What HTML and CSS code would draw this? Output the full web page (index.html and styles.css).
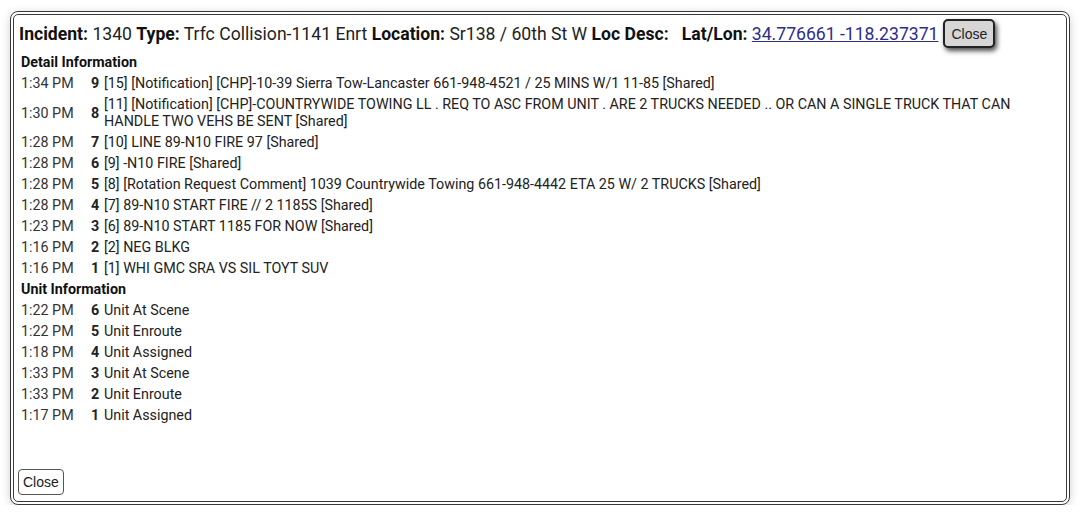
FILE: index.html
```html
<!DOCTYPE html>
<html>
<head>
<meta charset="utf-8">
<link rel="stylesheet" href="styles.css">
</head>
<body>
<div class="frame">
  <div class="header">
    <span class="title"><b>Incident:</b> 1340 <b>Type:</b> Trfc Collision-1141 Enrt <b>Location:</b> Sr138 / 60th St W <b>Loc Desc:</b>&nbsp;&nbsp; <b>Lat/Lon:</b> <a href="#" class="link">34.776661 -118.237371</a></span>
    <button class="btn-top">Close</button>
  </div>
  <table class="log">
    <tr><th colspan="3">Detail Information</th></tr>
    <tr><td class="t">1:34 PM</td><td class="n">9</td><td>[15] [Notification] [CHP]-10-39 Sierra Tow-Lancaster 661-948-4521 / 25 MINS W/1 11-85 [Shared]</td></tr>
    <tr><td class="t">1:30 PM</td><td class="n">8</td><td>[11] [Notification] [CHP]-COUNTRYWIDE TOWING LL . REQ TO ASC FROM UNIT . ARE 2 TRUCKS NEEDED .. OR CAN A SINGLE TRUCK THAT CAN HANDLE TWO VEHS BE SENT [Shared]</td></tr>
    <tr><td class="t">1:28 PM</td><td class="n">7</td><td>[10] LINE 89-N10 FIRE 97 [Shared]</td></tr>
    <tr><td class="t">1:28 PM</td><td class="n">6</td><td>[9] -N10 FIRE [Shared]</td></tr>
    <tr><td class="t">1:28 PM</td><td class="n">5</td><td>[8] [Rotation Request Comment] 1039 Countrywide Towing 661-948-4442 ETA 25 W/ 2 TRUCKS [Shared]</td></tr>
    <tr><td class="t">1:28 PM</td><td class="n">4</td><td>[7] 89-N10 START FIRE // 2 1185S [Shared]</td></tr>
    <tr><td class="t">1:23 PM</td><td class="n">3</td><td>[6] 89-N10 START 1185 FOR NOW [Shared]</td></tr>
    <tr><td class="t">1:16 PM</td><td class="n">2</td><td>[2] NEG BLKG</td></tr>
    <tr><td class="t">1:16 PM</td><td class="n">1</td><td>[1] WHI GMC SRA VS SIL TOYT SUV</td></tr>
    <tr><th colspan="3">Unit Information</th></tr>
    <tr><td class="t">1:22 PM</td><td class="n">6</td><td>Unit At Scene</td></tr>
    <tr><td class="t">1:22 PM</td><td class="n">5</td><td>Unit Enroute</td></tr>
    <tr><td class="t">1:18 PM</td><td class="n">4</td><td>Unit Assigned</td></tr>
    <tr><td class="t">1:33 PM</td><td class="n">3</td><td>Unit At Scene</td></tr>
    <tr><td class="t">1:33 PM</td><td class="n">2</td><td>Unit Enroute</td></tr>
    <tr><td class="t">1:17 PM</td><td class="n">1</td><td>Unit Assigned</td></tr>
  </table>
  <div class="footer">
    <button class="btn-bottom">Close</button>
  </div>
</div>
</body>
</html>
```
FILE: styles.css
```css
html, body {
  margin: 0;
  padding: 0;
  background: #ffffff;
}
body {
  padding: 11px 10px 0 10px;
  font-family: Roboto, "Liberation Sans", sans-serif;
  color: #222;
}
.frame {
  box-sizing: border-box;
  width: 1060px;
  height: 494px;
  border: 4px double #3a3a3a;
  border-radius: 8px;
  box-shadow: 0 2px 10px rgba(0,0,0,0.18);
  display: flex;
  flex-direction: column;
  background: #fff;
}
.header {
  display: flex;
  align-items: center;
  padding: 4px 6px 4px 5px;
}
.title {
  font-size: 17.6px;
  color: #222;
}
.title b {
  font-weight: 700;
  color: #111;
}
.link {
  color: #2d2d8c;
  text-decoration: underline;
}
.btn-top {
  margin-left: 5px;
  font-family: "Liberation Sans", Arial, sans-serif;
  font-size: 14px;
  color: #222;
  background: #d6d6d6;
  border: 2px solid #222;
  border-radius: 5px;
  height: 29px;
  padding: 0 6px;
  box-shadow: 2px 3px 5px rgba(0,0,0,0.7);
}
.log {
  border-collapse: collapse;
  margin: 0 6px 0 5px;
  font-size: 14.3px;
  line-height: 17px;
  color: #222;
}
.log th {
  text-align: left;
  font-weight: 700;
  padding: 2px;
  color: #111;
}
.log td {
  padding: 2px;
  vertical-align: middle;
}
.log td.t {
  width: 66px;
  white-space: nowrap;
  color: #333;
}
.log td.n {
  font-weight: 700;
  width: 9px;
}
.footer {
  margin-top: auto;
  padding: 0 0 6px 4px;
}
.btn-bottom {
  font-family: "Liberation Sans", Arial, sans-serif;
  font-size: 14px;
  color: #222;
  background: #fff;
  border: 1px solid #555;
  border-radius: 4px;
  height: 26px;
  padding: 0 4px;
}
```
